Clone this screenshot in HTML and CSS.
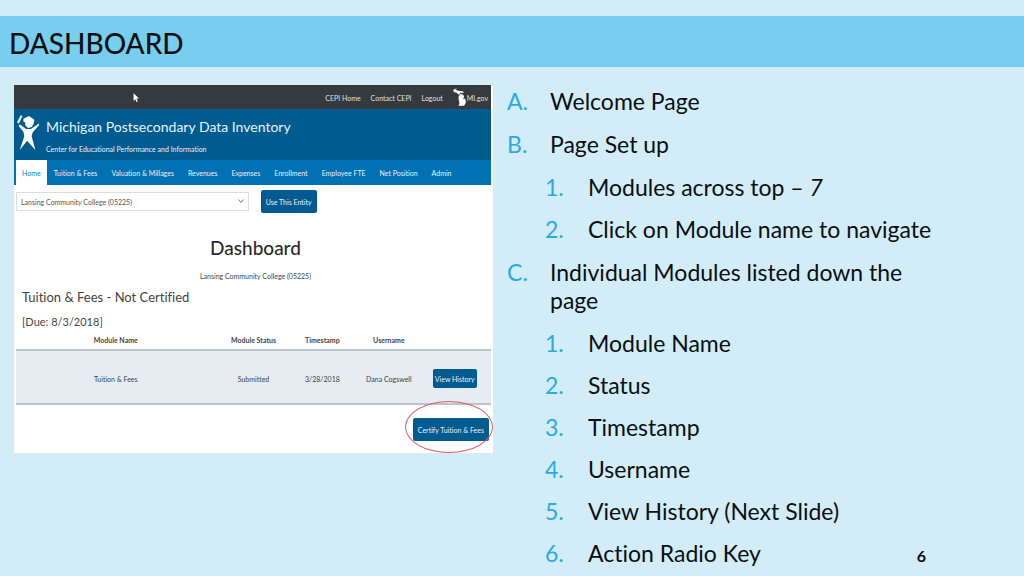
FILE: index.html
```html
<!DOCTYPE html>
<html lang="en">
<head>
<meta charset="utf-8">
<meta name="viewport" content="width=device-width, initial-scale=1">
<title>Dashboard</title>
<link rel="stylesheet" href="styles.css">
</head>
<body>
<header class="title-band"><h1>DASHBOARD</h1></header>
<main class="slide">
  <section class="app" aria-label="Michigan Postsecondary Data Inventory">
    <div class="topbar">
      <svg class="cursor" viewBox="0 0 10 16" aria-hidden="true"><path d="M1 0v13l3-3 2 5 2-1-2-5h4z" fill="#fff"/></svg>
      <a href="#">CEPI Home</a>
      <a href="#">Contact CEPI</a>
      <a href="#">Logout</a>
      <a href="#" class="state"><svg class="mitten" viewBox="0 0 14 20" aria-hidden="true"><path d="M0 2 4 0 3 2 7 3 10 3 12 5 8 5 6 7 4 5 1 4ZM8 6 11 7 12 9 11 12 13 11 14 15 12 19 6 19 7 16 6 12 6 9Z" fill="#fff"/></svg>MI.gov</a>
    </div>
    <div class="banner">
      <svg class="logo" viewBox="0 0 24 40" aria-hidden="true"><path d="M4 0 6 1 2 9 0 8Z" fill="#fff"/><path d="M7 4 13 1 19 5 18 10 16 13 12 14 9 11 9 8 7 7Z" fill="#fff"/><path d="M3 10 10 15 15 15 24 9 24 11 17 19 16 23 20 38 11 28 3 38 8 23 7 18 2 12Z" fill="#fff"/></svg>
      <div>
        <h2>Michigan Postsecondary Data Inventory</h2>
        <p>Center for Educational Performance and Information</p>
      </div>
    </div>
    <nav class="tabs">
      <a href="#" class="active">Home</a>
      <a href="#">Tuition &amp; Fees</a>
      <a href="#">Valuation &amp; Millages</a>
      <a href="#">Revenues</a>
      <a href="#">Expenses</a>
      <a href="#">Enrollment</a>
      <a href="#">Employee FTE</a>
      <a href="#">Net Position</a>
      <a href="#">Admin</a>
    </nav>
    <form class="entity">
      <div class="picker">
        <select aria-label="Entity"><option>Lansing Community College (05225)</option></select>
        <svg class="chevron" viewBox="0 0 6 4" aria-hidden="true"><path d="M0.5 0.5 3 3.5 5.5 0.5" fill="none" stroke="#777"/></svg>
      </div>
      <button type="button">Use This Entity</button>
    </form>
    <div class="heading">
      <h2>Dashboard</h2>
      <p>Lansing Community College (05225)</p>
    </div>
    <div class="module">
      <h3>Tuition &amp; Fees - Not Certified</h3>
      <p>[Due: 8/3/2018]</p>
    </div>
    <table>
      <thead><tr><th class="c-name">Module Name</th><th class="c-status">Module Status</th><th class="c-time">Timestamp</th><th class="c-user">Username</th><th></th></tr></thead>
      <tbody><tr><td>Tuition &amp; Fees</td><td>Submitted</td><td>3/28/2018</td><td>Dana Cogswell</td><td class="action"><button type="button">View History</button></td></tr></tbody>
    </table>
    <div class="certify">
      <button type="button">Certify Tuition &amp; Fees</button>
      <span class="ring"></span>
    </div>
  </section>
  <ol class="outline">
    <li>Welcome Page</li>
    <li>Page Set up
      <ol>
        <li>Modules across top – <em>7</em></li>
        <li>Click on Module name to navigate</li>
      </ol>
    </li>
    <li>Individual Modules listed down the page
      <ol>
        <li>Module Name</li>
        <li>Status</li>
        <li>Timestamp</li>
        <li>Username</li>
        <li>View History (Next Slide)</li>
        <li>Action Radio Key</li>
      </ol>
    </li>
  </ol>
</main>
<footer class="page-number">6</footer>
</body>
</html>
```
FILE: styles.css
```css
* { box-sizing: border-box; }
body {
  margin: 0;
  padding-top: 16px;
  min-height: 100vh;
  overflow: hidden;
  background: #d2edf8;
  color: #0b0f12;
  font-family: Lato, sans-serif;
  font-variant-ligatures: none;
}
h1, h2, h3, p { margin: 0; font-weight: 400; }
a { color: inherit; text-decoration: none; }

.title-band { background: #78ceef; padding: 0 9px; }
.title-band h1 { font-size: 28px; font-weight: 500; line-height: 51px; padding-top: 2px; height: 51px; }

.slide {
  display: grid;
  grid-template-columns: 479fr 517fr;
  align-items: start;
  gap: 14px;
  padding: 18px 0 0 14px;
}

.app { background: #fff; color: #444; font-size: 7px; line-height: 12px; padding-bottom: 12px; white-space: nowrap; }
.topbar {
  position: relative;
  display: flex;
  justify-content: flex-end;
  align-items: center;
  gap: 10px;
  height: 24px;
  padding: 2px 3px 0 0;
  margin-right: 2px;
  background: #353a3f;
  color: #dfe2e4;
}
.cursor { position: absolute; left: 25%; top: 8px; width: 6px; height: 10px; }
.state { display: flex; align-items: center; gap: 1px; }
.mitten { width: 13px; height: 19px; margin-top: -2px; }
.banner {
  display: flex;
  gap: 7px;
  height: 51px;
  margin-right: 2px;
  padding: 5px 3px;
  background: #005b91;
  color: #e8f3fa;
}
.logo { width: 22px; height: 39px; }
.banner h2 { font-size: 14px; line-height: 26px; }
.banner p { line-height: 18px; }
.tabs { display: flex; height: 25px; margin-right: 2px; padding-left: 2px; background: #0071b3; color: #e8f3fa; }
.tabs a { padding: 0 7px; line-height: 26px; }
.tabs .active { padding: 0 6px; background: #fff; color: #2382bd; }

.entity { display: flex; align-items: center; gap: 12px; padding: 5px 2px 0; }
.picker { position: relative; width: 49%; }
select {
  display: block;
  width: 100%;
  height: 19px;
  padding: 0 4px;
  border: 1px solid #ddd;
  background: #fff;
  color: #555;
  font: inherit;
  appearance: none;
}
.chevron { position: absolute; right: 5px; top: 7px; width: 6px; height: 4px; }
button {
  height: 23px;
  padding: 0 5px;
  border: 0;
  border-radius: 2px;
  background: #005b91;
  color: #e8f3fa;
  font: inherit;
}
.heading { padding: 20px 0 0 4px; text-align: center; }
.heading h2 { font-size: 19px; font-weight: 500; line-height: 30px; color: #2b2b2b; }
.heading p { line-height: 26px; }
.module { padding: 0 8px; }
.module h3 { font-size: 13px; line-height: 16px; }
.module p { font-size: 11px; line-height: 34px; }

table { width: calc(100% - 4px); margin: -5px 0 0 2px; border-collapse: collapse; table-layout: fixed; text-align: center; }
th { height: 16px; padding: 0; font-weight: 700; vertical-align: top; }
td { height: 54px; padding: 3px 0 0; background: #e5edf2; border: 1px solid #bcc5ca; border-width: 2px 0; }
.c-name { width: 42%; }
.c-status { width: 16%; }
.c-time { width: 13%; }
.c-user { width: 15%; }
.action { padding-right: 6px; }
.action button { height: 19px; padding: 0 2px; }
.certify { position: relative; display: flex; justify-content: flex-end; padding: 13px 4px 0; }
.ring {
  position: absolute;
  right: 0;
  top: -4px;
  width: 88px;
  height: 52px;
  border: 1px solid #dc5f66;
  border-radius: 50%;
}

.outline, .outline ol { display: grid; list-style: none; margin: 0; padding: 0; }
.outline {
  gap: 15px;
  padding: 2px 80px 0 0;
  font-size: 23px;
  line-height: 28px;
  counter-reset: letter;
}
.outline > li { position: relative; padding-left: 43px; counter-increment: letter; }
.outline > li::before { content: counter(letter, upper-alpha) "."; position: absolute; left: 0; color: #29abe2; }
.outline ol { gap: 14px; padding-top: 15px; counter-reset: step; }
.outline ol li { position: relative; padding-left: 38px; counter-increment: step; }
.outline ol li::before { content: counter(step) "."; position: absolute; left: -5px; color: #29abe2; }

.page-number { position: absolute; right: 98px; bottom: 9px; font-size: 16px; line-height: 22px; font-weight: 700; }
```
